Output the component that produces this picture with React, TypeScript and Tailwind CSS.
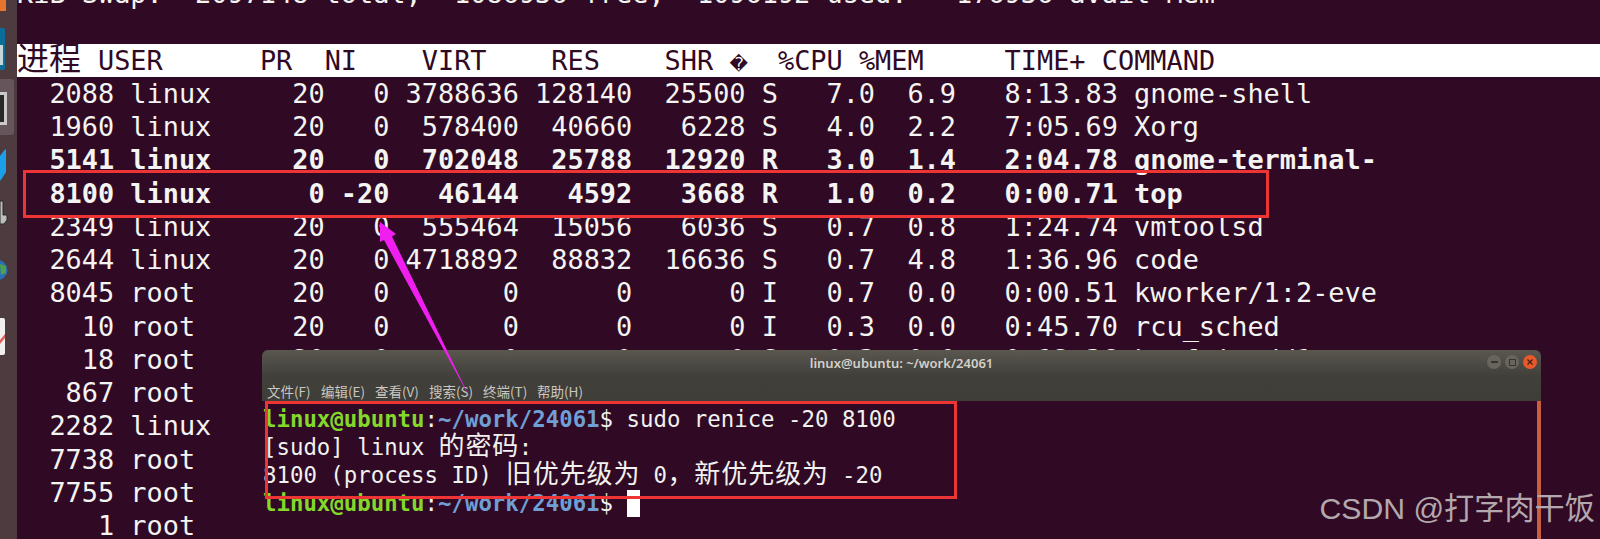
import React from "react";

const mono = "font-['DejaVu_Sans_Mono','Noto_Sans_CJK_SC',monospace]";

const rows: { t: string; b?: boolean }[] = [
  { t: "  2088 linux     20   0 3788636 128140  25500 S   7.0  6.9   8:13.83 gnome-shell" },
  { t: "  1960 linux     20   0  578400  40660   6228 S   4.0  2.2   7:05.69 Xorg" },
  { t: "  5141 linux     20   0  702048  25788  12920 R   3.0  1.4   2:04.78 gnome-terminal-", b: true },
  { t: "  8100 linux      0 -20   46144   4592   3668 R   1.0  0.2   0:00.71 top", b: true },
  { t: "  2349 linux     20   0  555464  15056   6036 S   0.7  0.8   1:24.74 vmtoolsd" },
  { t: "  2644 linux     20   0 4718892  88832  16636 S   0.7  4.8   1:36.96 code" },
  { t: "  8045 root      20   0       0      0      0 I   0.7  0.0   0:00.51 kworker/1:2-eve" },
  { t: "    10 root      20   0       0      0      0 I   0.3  0.0   0:45.70 rcu_sched" },
  { t: "    18 root      20   0       0      0      0 S   0.3  0.0   0:12.36 ksoftirqd/1" },
  { t: "   867 root      20   0       0      0      0 I   0.3  0.0   0:03.12 kworker/0:3" },
  { t: "  2282 linux     20   0  356724   8328   6120 S   0.3  0.4   0:10.25 ibus-daemon" },
  { t: "  7738 root      20   0       0      0      0 I   0.3  0.0   0:01.04 kworker/u256:1" },
  { t: "  7755 root      20   0       0      0      0 I   0.3  0.0   0:00.88 kworker/0:0" },
  { t: "     1 root      20   0  225576   9420   6668 S   0.0  0.5   0:08.41 systemd" },
];

function Wide({ text }: { text: string }) {
  return (
    <>
      {Array.from(text).map((c, i) => (
        <span key={i} className="inline-block w-[26.94px] text-center text-[26px] leading-[20px] font-['Noto_Sans_CJK_SC',sans-serif]">
          {c}
        </span>
      ))}
    </>
  );
}

function Prompt() {
  return (
    <>
      <span className="font-bold text-[#83d82a]">linux@ubuntu</span>
      <span>:</span>
      <span className="font-bold text-[#6f9fd4]">~/work/24061</span>
      <span>$ </span>
    </>
  );
}

function Dock() {
  return (
    <div className="w-[17px] shrink-0 bg-[#4d3b40]">
      <svg width="17" height="539" viewBox="0 0 17 539" className="block">
        <rect x="0" y="0" width="6" height="11" fill="#e8752d" />
        <rect x="-3" y="28" width="8" height="42" rx="2" fill="#0b6d98" />
        <rect x="0" y="45" width="3" height="20" fill="#c9d6d8" />
        <rect x="-4" y="79" width="18" height="56" rx="3" fill="#66555a" />
        <rect x="-3" y="92" width="10" height="33" fill="#c9c9c7" />
        <rect x="-3" y="95" width="7" height="27" fill="#2a2826" />
        <path d="M0 156 Q4 150 6 149 L6 172 Q3 177 0 181 Z" fill="#1a9fe8" />
        <path d="M0 201 H3 V215 H7 V220 L4 224 H0 Z" fill="#bdbdbb" stroke="#2a2a2a" strokeWidth="1" />
        <circle cx="-2.5" cy="270" r="10" fill="#2a6fb5" />
        <path d="M0 264 L6 266 L6 273 L1 275 Z" fill="#4fa04a" />
        <rect x="-4" y="318" width="9" height="37" rx="2" fill="#f2f0ee" />
        <path d="M0 340 L5 334 L5 338 L0 344 Z" fill="#e0605a" />
      </svg>
    </div>
  );
}

function TerminalWindow() {
  const menu = ["文件(F)", "编辑(E)", "查看(V)", "搜索(S)", "终端(T)", "帮助(H)"];
  return (
    <div className="absolute left-[262px] top-[350px] bottom-0 w-[1279px] flex flex-col rounded-t-[6px] overflow-hidden bg-[#300a24]">
      <div className="h-[51px] shrink-0 flex flex-col bg-gradient-to-b from-[#5a574f] via-[#41403b] via-50% to-[#3e3d38]">
        <div className="h-[26px] flex items-center relative">
          <div className="w-full pt-[1px] text-center text-[13px] font-semibold text-[#d2d0c9] font-['Noto_Sans',sans-serif]">
            linux@ubuntu: ~/work/24061
          </div>
          <div className="absolute right-[4px] top-[5px] flex gap-[4px]">
            <div className="w-[14px] h-[14px] rounded-full bg-[#67655e] flex items-center justify-center">
              <div className="w-[7px] h-[1.5px] bg-[#35342f]" />
            </div>
            <div className="w-[14px] h-[14px] rounded-full bg-[#67655e] flex items-center justify-center">
              <div className="w-[7px] h-[7px] border border-[#35342f]" />
            </div>
            <div className="w-[14px] h-[14px] rounded-full bg-[#e9582a] flex items-center justify-center">
              <svg width="8" height="8" viewBox="0 0 8 8">
                <path d="M1.5 1.5 L6.5 6.5 M6.5 1.5 L1.5 6.5" stroke="#3a2018" strokeWidth="1.2" />
              </svg>
            </div>
          </div>
        </div>
        <div className="flex gap-[12px] pl-[5px] pt-[6px] text-[13.5px] leading-[19px] text-[#c9c7c0] font-['Noto_Sans_CJK_SC',sans-serif]">
          {menu.map((m) => (
            <span key={m} className="w-[42px] whitespace-pre">{m}</span>
          ))}
        </div>
      </div>
      <div className="flex-1 flex">
        <div className={`flex-1 pl-[1px] pt-[4px] text-[22.37px] leading-[28px] text-[#f1f1ef] whitespace-pre ${mono}`}>
          <div className="h-[28px]"><Prompt />sudo renice -20 8100</div>
          <div className="h-[28px]">[sudo] linux <Wide text="的密码" />:</div>
          <div className="h-[28px]">8100 (process ID) <Wide text="旧优先级为" /> 0<Wide text="，新优先级为" /> -20</div>
          <div className="h-[28px] flex items-center">
            <span><Prompt /></span>
            <span className="w-[13.5px] h-[27px] bg-white" />
          </div>
        </div>
        <div className="w-[4px] bg-[#c8603f]" />
      </div>
    </div>
  );
}

export default function App() {
  return (
    <div className="relative h-[539px] w-full overflow-hidden bg-[#300a24] flex">
      <Dock />
      <div className={`flex-1 -mt-[23px] text-[26.9px] leading-[33.25px] text-[#f4f4f2] whitespace-pre ${mono}`}>
        <div className="h-[33.25px]">KiB Swap:  2097148 total,  1086936 free,  1096192 used.   176936 avail Mem</div>
        <div className="h-[33.25px]" />
        <div className="h-[33.25px] bg-white text-[#300a24]">
          <span className="inline-block w-[64.8px] text-[32px] leading-[20px] font-['Noto_Sans_CJK_SC',sans-serif]">进程</span>
          {" USER      PR  NI    VIRT    RES    SHR "}
          <span className="inline-block w-[16.19px] text-center text-[18px] leading-[20px] font-['DejaVu_Sans',sans-serif]">�</span>
          {"  %CPU %MEM     TIME+ COMMAND"}
        </div>
        {rows.map((r) => (
          <div key={r.t} className={`h-[33.25px] ${r.b ? "font-bold" : ""}`}>{r.t}</div>
        ))}
      </div>

      <TerminalWindow />

      <div className="absolute left-[23px] top-[170px] w-[1246px] h-[48px] border-[3px] border-[#ee3535]" />
      <div className="absolute left-[265px] top-[401px] w-[692px] h-[98px] border-[3px] border-[#ee3535]" />

      <svg width="1600" height="539" viewBox="0 0 1600 539" className="absolute left-0 top-0 pointer-events-none">
        <polygon points="380,222 396,234 392,236.5 470,398 384,240 380,242" fill="#f01ef0" />
      </svg>

      <div className="absolute right-[5px] top-[491px] whitespace-pre text-[30.2px] leading-[36px] text-[#b3a8ae] font-['Liberation_Sans','Noto_Sans_CJK_SC',sans-serif]">
        CSDN @打字肉干饭
      </div>
    </div>
  );
}
